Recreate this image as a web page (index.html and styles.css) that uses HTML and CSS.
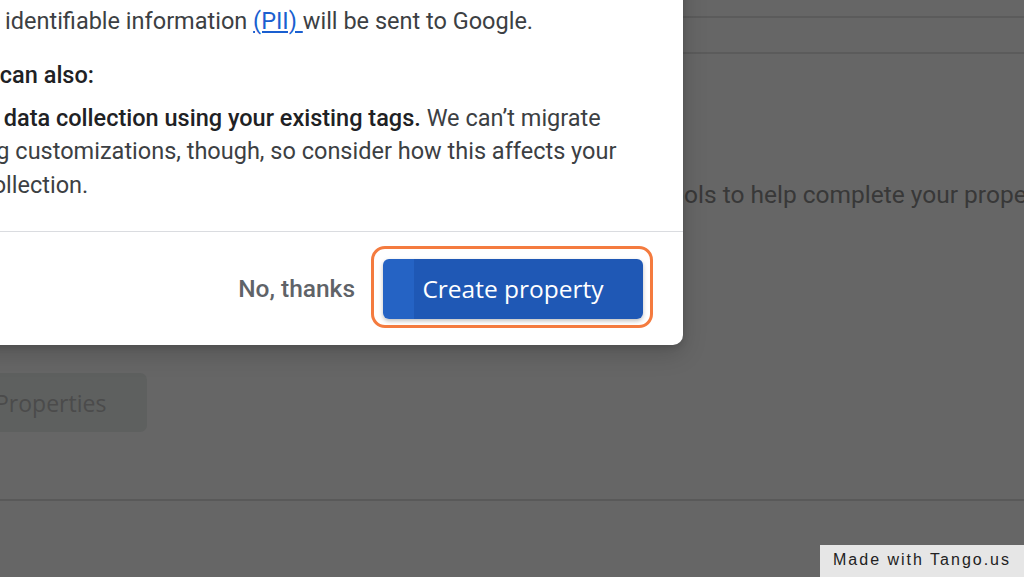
FILE: index.html
```html
<!DOCTYPE html>
<html lang="en">
<head>
<meta charset="utf-8">
<title>Create property</title>
<link rel="stylesheet" href="styles.css">
</head>
<body>
<div class="page">
  <div class="topbar"></div>
  <div class="subbar"></div>
  <section class="setup">
    <p class="setup-text"><span class="hidden-prefix">Use the Setup Assistant to find to</span>ols to help complete your property setup.</p>
    <div class="setup-actions">
      <button class="ghost-btn">Properties</button>
    </div>
  </section>
  <div class="rule"></div>
</div>

<div class="dialog" role="dialog">
  <div class="dialog-body">
    <p class="intro">Data will be collected with a new Google tag on your site,<br>and no identifiable information <a href="#">(PII) </a>will be sent to Google.</p>
    <p class="lead">You can also:</p>
    <ul class="options">
      <li><strong>Keep data collection using your existing tags.</strong> We can’t migrate<br>existing customizations, though, so consider how this affects your<br>data collection.</li>
    </ul>
  </div>
  <div class="dialog-footer">
    <button class="text-btn">No, thanks</button>
    <button class="primary-btn">Create property</button>
  </div>
</div>

<div class="tango">Made with Tango.us</div>
</body>
</html>
```

FILE: styles.css
```css
html, body {
  margin: 0;
  padding: 0;
  width: 1024px;
  height: 577px;
  overflow: hidden;
  background: #666666;
  font-family: Roboto, "Noto Sans", sans-serif;
}

.page {
  display: flex;
  flex-direction: column;
  height: 577px;
}

.topbar {
  height: 16px;
  border-bottom: 2px solid #5b5b5b;
}

.subbar {
  height: 34px;
  border-bottom: 2px solid #5b5b5b;
}

.setup {
  display: flex;
  flex-direction: column;
  padding-top: 127px;
  height: 318px;
}

.setup-text {
  margin: 0;
  font-size: 24.5px;
  line-height: 28px;
  color: #383838;
  white-space: nowrap;
}

.hidden-prefix {
  display: inline-block;
  width: 684px;
  text-align: right;
  white-space: nowrap;
}

.setup-actions {
  display: flex;
  margin-top: 164px;
  margin-left: -21px;
}

.ghost-btn {
  height: 59px;
  border: none;
  border-radius: 7px;
  background: #5e605f;
  color: #4b4b4b;
  font-family: "Open Sans", sans-serif;
  font-size: 23px;
  font-weight: 500;
  padding: 0 41px 0 16px;
  white-space: nowrap;
}

.rule {
  border-bottom: 2px solid #595959;
}

/* dialog */
.dialog {
  position: absolute;
  left: -80px;
  top: -60px;
  width: 763px;
  height: 405px;
  background: #ffffff;
  border-radius: 10px;
  box-shadow: 0 8px 24px rgba(0, 0, 0, 0.18), 0 2px 6px rgba(0, 0, 0, 0.12);
  display: flex;
  flex-direction: column;
}

.dialog-body {
  padding: 31px 40px 0 20px;
  height: 260px;
  border-bottom: 1px solid #dadce0;
  color: #3c4043;
  font-size: 23.5px;
  line-height: 33.5px;
  white-space: nowrap;
}

.dialog-body p {
  margin: 0;
}

.intro {
  margin-left: -12px !important;
}

.intro a {
  color: #1a5fd0;
  text-decoration: underline;
}

.lead {
  margin-top: 21px !important;
  margin-left: 14px !important;
  font-weight: 500;
  color: #202124;
}

.options {
  list-style: none;
  margin: 9px 0 0 -12px;
  padding: 0;
}

.options li {
  text-indent: 17px;
}

.options strong {
  font-weight: 500;
  color: #202124;
}

.dialog-footer {
  flex: 1;
  display: flex;
  align-items: center;
  justify-content: flex-end;
  gap: 28px;
  padding: 0 40px 0 0;
}

.text-btn {
  border: none;
  background: none;
  padding: 0;
  font-family: Roboto, sans-serif;
  font-size: 24.5px;
  font-weight: 500;
  color: #5f6368;
}

.primary-btn {
  position: relative;
  width: 260px;
  height: 60px;
  border: none;
  border-radius: 6px;
  background: linear-gradient(90deg, #2563c4 0, #2563c4 31px, #1f58b5 31px);
  box-shadow: 0 2px 4px rgba(0, 0, 0, 0.25);
  color: #ffffff;
  font-family: "Open Sans", sans-serif;
  font-size: 24.5px;
  font-weight: 500;
}

.primary-btn::after {
  content: "";
  position: absolute;
  top: -13px;
  left: -12px;
  right: -10px;
  bottom: -9px;
  border: 3px solid #f47b3f;
  border-radius: 14px;
}

.tango {
  position: absolute;
  right: 0;
  bottom: 0;
  width: 204px;
  height: 32px;
  box-sizing: border-box;
  padding: 6px 0 0 13px;
  background: #e6e6e6;
  color: #222222;
  font-family: "Liberation Sans", sans-serif;
  font-size: 16px;
  letter-spacing: 2px;
  white-space: nowrap;
}
```
